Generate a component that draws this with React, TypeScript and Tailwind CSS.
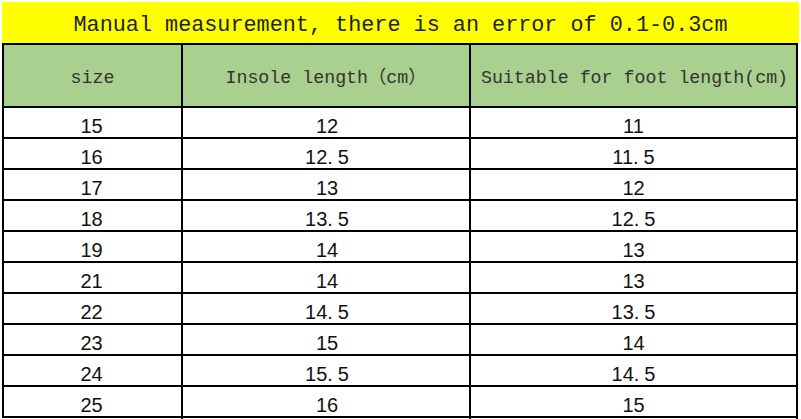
import React from "react";

const rows: [string, string, string][] = [
  ["15", "12", "11"],
  ["16", "12.5", "11.5"],
  ["17", "13", "12"],
  ["18", "13.5", "12.5"],
  ["19", "14", "13"],
  ["21", "14", "13"],
  ["22", "14.5", "13.5"],
  ["23", "15", "14"],
  ["24", "15.5", "14.5"],
  ["25", "16", "15"],
];

// decimals in the sheet render with a wide gap after the point
const Num = ({ value }: { value: string }) => {
  const [whole, frac] = value.split(".");
  if (frac === undefined) return <>{whole}</>;
  return (
    <>
      {whole}.<span className="ml-[5px]">{frac}</span>
    </>
  );
};

const mono = { fontFamily: '"Liberation Mono", "Noto Sans CJK SC", monospace' };
const sans = { fontFamily: '"Liberation Sans", Arial, sans-serif' };

const App = () => {
  return (
    <div className="w-[801px] h-[419px] bg-white overflow-hidden pt-[2px]">
      {/* Title band */}
      <div
        className="ml-[2px] w-[797px] h-[41px] bg-[#ffff00] flex items-center justify-center pt-[7px] text-[21.8px] text-[#222] leading-none"
        style={mono}
      >
        Manual measurement, there is an error of 0.1-0.3cm
      </div>

      <div className="ml-[2px] w-[796px] border-l-2 border-t-2 border-black">
        {/* Header */}
        <div
          className="grid grid-cols-[179px_288px_327px] h-[63px] bg-[#a9d08e] border-b-2 border-black text-[18.3px] text-[#333]"
          style={mono}
        >
          <div className="border-r-2 border-black flex items-center justify-center pt-[7px]">size</div>
          <div className="border-r-2 border-black flex items-center justify-center pt-[7px]">Insole length（cm）</div>
          <div className="border-r-2 border-black flex items-center justify-center pt-[7px] pl-[2px]">
            Suitable for foot length(cm)
          </div>
        </div>

        {/* Data rows */}
        {rows.map(([size, insole, foot]) => (
          <div
            key={size}
            className="grid grid-cols-[179px_288px_327px] h-[31px] border-b-2 border-black text-[20px] text-[#111]"
            style={sans}
          >
            <div className="border-r-2 border-black flex items-center justify-center pt-[3px] pr-[2px]">{size}</div>
            <div className="border-r-2 border-black flex items-center justify-center pt-[3px] pl-[2px]">
              <Num value={insole} />
            </div>
            <div className="border-r-2 border-black flex items-center justify-center pt-[3px]">
              <Num value={foot} />
            </div>
          </div>
        ))}
      </div>
    </div>
  );
};

export default App;
